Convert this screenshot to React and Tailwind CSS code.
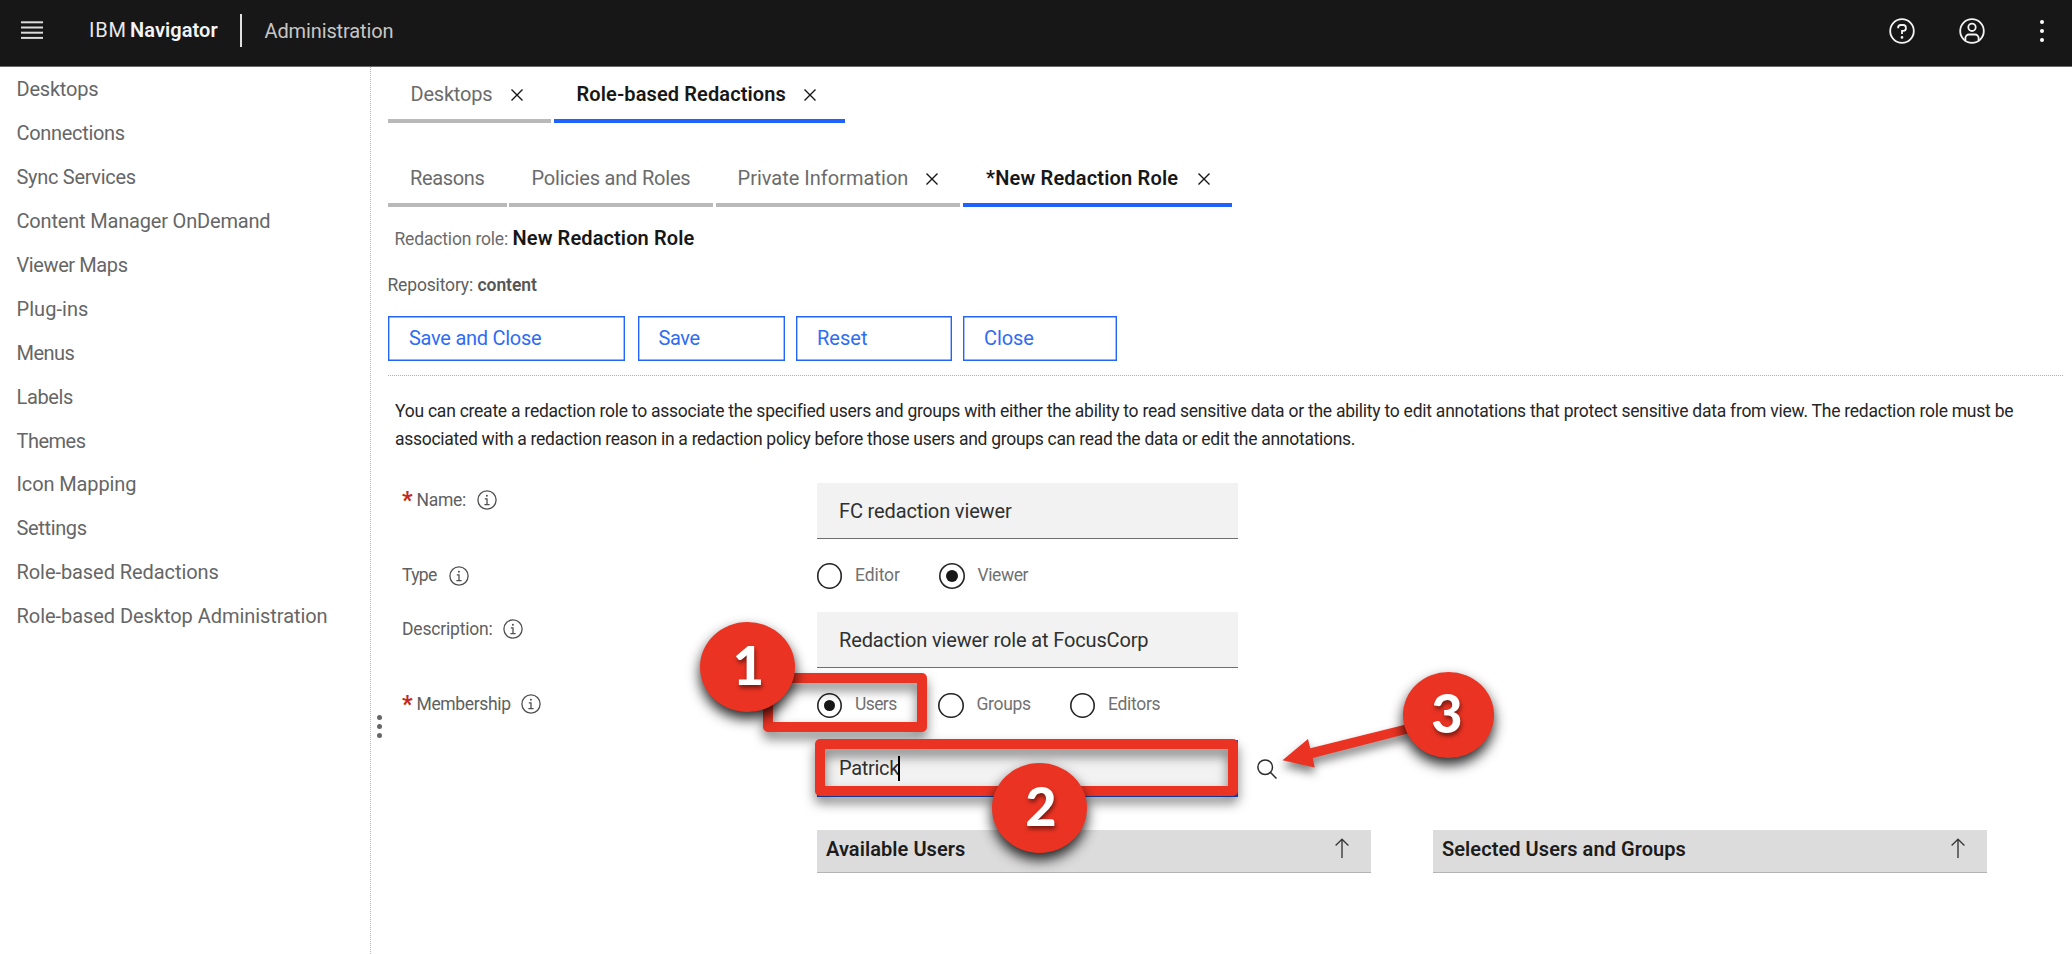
const NAV_ITEMS = [
  { label: "Desktops", tracking: "tracking-[-0.21px]" },
  { label: "Connections", tracking: "tracking-[-0.32px]" },
  { label: "Sync Services", tracking: "tracking-[-0.3px]" },
  { label: "Content Manager OnDemand", tracking: "tracking-[-0.18px]" },
  { label: "Viewer Maps", tracking: "tracking-[-0.4px]" },
  { label: "Plug-ins", tracking: "tracking-[0.05px]" },
  { label: "Menus", tracking: "tracking-[-0.53px]" },
  { label: "Labels", tracking: "tracking-[-0.37px]" },
  { label: "Themes", tracking: "tracking-[-0.5px]" },
  { label: "Icon Mapping", tracking: "tracking-[-0.12px]" },
  { label: "Settings", tracking: "tracking-[-0.35px]" },
  { label: "Role-based Redactions", tracking: "tracking-[-0.07px]" },
  { label: "Role-based Desktop Administration", tracking: "tracking-[-0.05px]" },
];

function CloseIcon() {
  return (
    <svg className="mt-px size-3 shrink-0" viewBox="0 0 12 12" fill="none" stroke="#161616" strokeWidth="1.4">
      <path d="M.5.5l11 11M11.5.5l-11 11" />
    </svg>
  );
}

function InfoIcon() {
  return (
    <svg className="size-5 shrink-0" viewBox="0 0 20 20" fill="none" stroke="#4f4f4f" strokeWidth="1.3">
      <circle cx="10" cy="10" r="9.1" />
      <path d="M7.4 14.6h5.2M10 14.6V8.9H7.8" />
      <circle cx="9.9" cy="5.8" r="1" fill="#4f4f4f" stroke="none" />
    </svg>
  );
}

function HelpIcon() {
  return (
    <svg className="size-[26px]" viewBox="0 0 26 26" fill="none" stroke="#f4f4f4" strokeWidth="1.8">
      <circle cx="13" cy="13" r="11.8" />
      <path d="M9.1 10.3v-.6a2.7 2.7 0 0 1 2.7-2.7h2.4a2.7 2.7 0 0 1 2.7 2.7v.5a2.7 2.7 0 0 1-2.7 2.7H13v3.2" />
      <circle cx="13" cy="19.4" r="1.3" fill="#f4f4f4" stroke="none" />
    </svg>
  );
}

function UserIcon() {
  return (
    <svg className="size-[26px]" viewBox="0 0 26 26" fill="none" stroke="#f4f4f4" strokeWidth="1.8">
      <circle cx="13" cy="13" r="11.8" />
      <circle cx="13" cy="9.3" r="3.7" />
      <path d="M6.4 22.2v-2.1a3.6 3.6 0 0 1 3.6-3.6h6a3.6 3.6 0 0 1 3.6 3.6v2.1" />
    </svg>
  );
}

function SortIcon() {
  return (
    <svg className="h-5 w-[14px]" viewBox="0 0 14 20" fill="none" stroke="#3c3c3c" strokeWidth="1.4">
      <path d="M7 20V1.2M.6 7.6L7 1.2l6.4 6.4" />
    </svg>
  );
}

function Header() {
  return (
    <header className="flex h-[67px] shrink-0 items-center border-b border-[#6a6a6a] bg-[#171717] text-[20px] leading-none">
      <svg className="mb-[7px] ml-[20.5px] h-[18px] w-[22.5px]" viewBox="0 0 22.5 18" fill="#dcdcdc">
        <rect y="0.3" width="22.5" height="2" />
        <rect y="5.5" width="22.5" height="2" />
        <rect y="10.7" width="22.5" height="2" />
        <rect y="15.9" width="22.5" height="2" />
      </svg>
      <div className="ml-[46px] flex pb-[7px]">
        <span className="w-[41px] tracking-[0.8px] text-[#e8e8e8]">IBM</span>
        <span className="w-[110px] font-semibold tracking-[0.08px] text-[#f4f4f4]">Navigator</span>
      </div>
      <div className="mb-[5px] h-[33px] w-[1.5px] bg-[#e0e0e0]" />
      <span className="ml-[23px] pb-1 tracking-[-0.12px] text-[#c6c6c6]">Administration</span>
      <div className="mb-[4px] ml-auto flex items-center pr-[28.5px]">
        <HelpIcon />
        <span className="ml-11">
          <UserIcon />
        </span>
        <span className="ml-[54.5px] flex flex-col gap-[5px]">
          <i className="size-1 rounded-full bg-white" />
          <i className="size-1 rounded-full bg-white" />
          <i className="size-1 rounded-full bg-white" />
        </span>
      </div>
    </header>
  );
}

function Tab({ label, active, closable, className }) {
  return (
    <div
      className={`flex h-14 items-center border-b-4 pt-[2px] text-[20px] leading-none whitespace-nowrap ${
        active ? "border-[#1f62fe] font-semibold text-[#171717]" : "border-[#b9b9b9] text-[#6b6b6b]"
      } ${className}`}
    >
      <span className="flex-1">{label}</span>
      {closable && <CloseIcon />}
    </div>
  );
}

function ActionButton({ children, className }) {
  return (
    <button
      className={`h-[45px] pb-px text-left text-[20px] leading-none text-[#2f6cf6] shadow-[inset_0_0_0_1.4px_#2464fa] ${className}`}
    >
      {children}
    </button>
  );
}

function Label({ children, required, className }) {
  return (
    <div className="flex h-[30px] items-center text-[17.5px] leading-none text-[#606060]">
      {required && <span className="w-[14.5px] text-[23px] leading-none font-extrabold text-[#c5281c]">*</span>}
      <span className={className}>{children}</span>
      <InfoIcon />
    </div>
  );
}

function Radio({ label, checked, className }) {
  return (
    <div className="flex items-center">
      <span className="-ml-[0.5px] flex size-[25.5px] shrink-0 items-center justify-center rounded-full shadow-[inset_0_0_0_1.6px_#242424]">
        {checked && <span className="size-[11.5px] rounded-full bg-[#171717]" />}
      </span>
      <span className={`ml-[13px] text-[17.5px] leading-none text-[#717171] ${className}`}>{label}</span>
    </div>
  );
}

function TextInput({ children, className }) {
  return (
    <div
      className={`flex w-[421px] items-center border-b border-[#6f6f6f] bg-[#f2f2f2] pl-[22px] text-[20px] leading-none text-[#303030] ${className}`}
    >
      {children}
    </div>
  );
}

function ListHeader({ children, className }) {
  return (
    <div className="flex h-[43px] w-[554px] items-center border-b border-[#b4b4b4] bg-[#dcdcdc] pr-[22px] pl-[9px] text-[20px] leading-none font-semibold text-[#1c1c1c]">
      <span className={`flex-1 pb-[4px] ${className}`}>{children}</span>
      <span className="pb-1.5">
        <SortIcon />
      </span>
    </div>
  );
}

function Badge({ children, className }) {
  return (
    <div
      className={`absolute flex items-center justify-center rounded-[50%] bg-[#ea3323] pb-[4px] font-[Lato] text-[54px] leading-none font-black text-white shadow-[0_7px_13px_rgba(0,0,0,0.85)] [text-shadow:1px_3px_4px_rgba(0,0,0,0.5)] ${className}`}
    >
      {children}
    </div>
  );
}

/* Numbered step markers laid over the form. */
function Annotations() {
  return (
    <>
      <div className="absolute top-[673px] left-[763px] h-[59px] w-[164px] rounded-[5px] border-10 border-[#ea3323] drop-shadow-[0_7px_6px_rgba(0,0,0,0.5)]" />
      <div className="absolute top-[739px] left-[815px] h-[57px] w-[423px] rounded-[5px] border-10 border-[#ea3323] drop-shadow-[0_7px_6px_rgba(0,0,0,0.5)]" />
      <svg
        className="absolute top-[715px] left-[1270px] drop-shadow-[0_6px_5px_rgba(0,0,0,0.5)]"
        width="160"
        height="70"
        viewBox="0 0 160 70"
        fill="#ea3323"
      >
        <path d="M12.5 45.3L38 24l2.3 9.2L140 8.6v9.4L42.7 43l2 9.4z" />
      </svg>
      <Badge className="top-[622px] left-[700px] h-[90px] w-[95px] pl-[2px]">1</Badge>
      <Badge className="top-[763px] left-[992px] h-[90px] w-[95px] pl-[3px]">2</Badge>
      <Badge className="top-[672px] left-[1403px] h-[86px] w-[91px] pr-[3px]">3</Badge>
    </>
  );
}

export default function App() {
  return (
    <div className="relative flex h-[954px] w-[2072px] flex-col overflow-hidden bg-white font-[Roboto,sans-serif]">
      <Header />
      <div className="flex flex-1">
        <nav className="flex w-[371px] shrink-0 flex-col border-r border-dotted border-[#b5b5b5] pl-[16.5px]">
          {NAV_ITEMS.map((item) => (
            <a
              key={item.label}
              className={`h-[43.95px] text-[20px] leading-[44px] whitespace-nowrap text-[#666666] ${item.tracking}`}
            >
              {item.label}
            </a>
          ))}
        </nav>
        <div className="flex w-[17px] shrink-0 flex-col items-center gap-[4px] pt-[648px]">
          <i className="size-[5px] rounded-full bg-[#666]" />
          <i className="size-[5px] rounded-full bg-[#666]" />
          <i className="size-[5px] rounded-full bg-[#666]" />
        </div>
        <main className="w-[1675px]">
          <div className="flex gap-[3px]">
            <Tab label="Desktops" closable className="w-[163px] pr-[28.5px] pl-[22.5px] tracking-[-0.21px]" />
            <Tab
              label="Role-based Redactions"
              active
              closable
              className="w-[291px] pr-[29.5px] pl-[22.5px] tracking-[0.11px]"
            />
          </div>
          <div className="mt-7 flex gap-[2.5px]">
            <Tab label="Reasons" className="w-[118.5px] pl-[22px] tracking-[-0.35px]" />
            <Tab label="Policies and Roles" className="w-[204px] pl-[22.5px] tracking-[-0.2px]" />
            <Tab
              label="Private Information"
              closable
              className="w-[244.5px] pr-[22px] pl-[22px] tracking-[0.01px]"
            />
            <Tab
              label="*New Redaction Role"
              active
              closable
              className="w-[269px] pr-[22px] pl-[23.5px] tracking-[0.18px]"
            />
          </div>
          <div className="mt-[18px] flex h-[26px] items-baseline pl-[6.5px] leading-[26px] whitespace-nowrap">
            <span className="w-[118px] text-[17.5px] tracking-[-0.17px] text-[#6b6b6b]">Redaction role:</span>
            <span className="text-[20px] font-semibold tracking-[0.11px] text-[#171717]">New Redaction Role</span>
          </div>
          <div className="mt-[21px] flex h-[26px] text-[17.5px] leading-[26px] text-[#606060]">
            <span className="-ml-[0.5px] w-[90px] tracking-[-0.16px]">Repository:</span>
            <span className="font-semibold tracking-[-0.06px] text-[#565656]">content</span>
          </div>
          <div className="mt-[18px] flex">
            <ActionButton className="w-[237px] pl-[21px] tracking-[-0.27px]">Save and Close</ActionButton>
            <ActionButton className="ml-[13px] w-[147px] pl-[20.5px] tracking-[-0.39px]">Save</ActionButton>
            <ActionButton className="ml-[10.5px] w-[156.5px] pl-[21.5px] tracking-[0.04px]">Reset</ActionButton>
            <ActionButton className="ml-[11px] w-[154px] pl-[21px] tracking-[-0.1px]">Close</ActionButton>
          </div>
          <div className="mt-[14px] mb-[22px] h-px w-[1675px] border-t border-dotted border-[#b0b0b0]" />
          <p className="pl-[7px] text-[17.5px] leading-[27.7px] whitespace-nowrap text-[#262626]">
            <span className="tracking-[-0.246px]">
              You can create a redaction role to associate the specified users and groups with either the ability to
              read sensitive data or the ability to edit annotations that protect sensitive data from view. The
              redaction role must be
            </span>
            <br />
            <span className="tracking-[-0.283px]">
              associated with a redaction reason in a redaction policy before those users and groups can read the data
              or edit the annotations.
            </span>
          </p>
          <form className="mt-[30px] grid grid-cols-[415px_1fr] pl-3.5">
            <div className="pt-[2px]">
              <Label required className="w-[60.5px] tracking-[-0.28px]">
                Name:
              </Label>
            </div>
            <TextInput className="h-14 tracking-[-0.14px]">FC redaction viewer</TextInput>
            <div className="flex h-[73px] items-center">
              <Label className="w-[47px] tracking-[-0.64px]">Type</Label>
            </div>
            <div className="flex h-[73px] items-center">
              <div className="w-[122.5px]">
                <Radio label="Editor" className="tracking-[-0.09px]" />
              </div>
              <Radio label="Viewer" checked className="tracking-[-0.42px]" />
            </div>
            <div className="pt-[2px]">
              <Label className="w-[101px] tracking-[-0.19px]">Description:</Label>
            </div>
            <TextInput className="h-14 tracking-[-0.14px]">Redaction viewer role at FocusCorp</TextInput>
            <div className="flex h-[72px] items-center">
              <Label required className="w-[104.5px] tracking-[-0.35px]">
                Membership
              </Label>
            </div>
            <div className="flex h-[72px] items-center pt-[2px]">
              <div className="w-[121.5px]">
                <Radio label="Users" checked className="pb-px tracking-[-0.6px]" />
              </div>
              <div className="w-[131.5px]">
                <Radio label="Groups" className="pb-px tracking-[-0.33px]" />
              </div>
              <Radio label="Editors" className="pb-px tracking-[-0.3px]" />
            </div>
            <div className="col-start-2 flex items-center">
              <TextInput className="h-[57px] tracking-[-0.3px] outline-2 -outline-offset-2 outline-[#1f4fd0]">
                Patrick
                <span className="-ml-px h-[25px] w-[1.5px] bg-black" />
              </TextInput>
              <svg className="ml-[18.5px] size-5" viewBox="0 0 20 20" fill="none" stroke="#2b2b2b" strokeWidth="1.5">
                <circle cx="8.2" cy="8.2" r="7.3" />
                <path d="M13.3 13.3l6.2 6.2" />
              </svg>
            </div>
            <div className="col-start-2 mt-[33px] flex gap-[62px]">
              <ListHeader className="tracking-[0.06px]">Available Users</ListHeader>
              <ListHeader className="tracking-[0.06px]">Selected Users and Groups</ListHeader>
            </div>
          </form>
        </main>
      </div>
      <Annotations />
    </div>
  );
}
